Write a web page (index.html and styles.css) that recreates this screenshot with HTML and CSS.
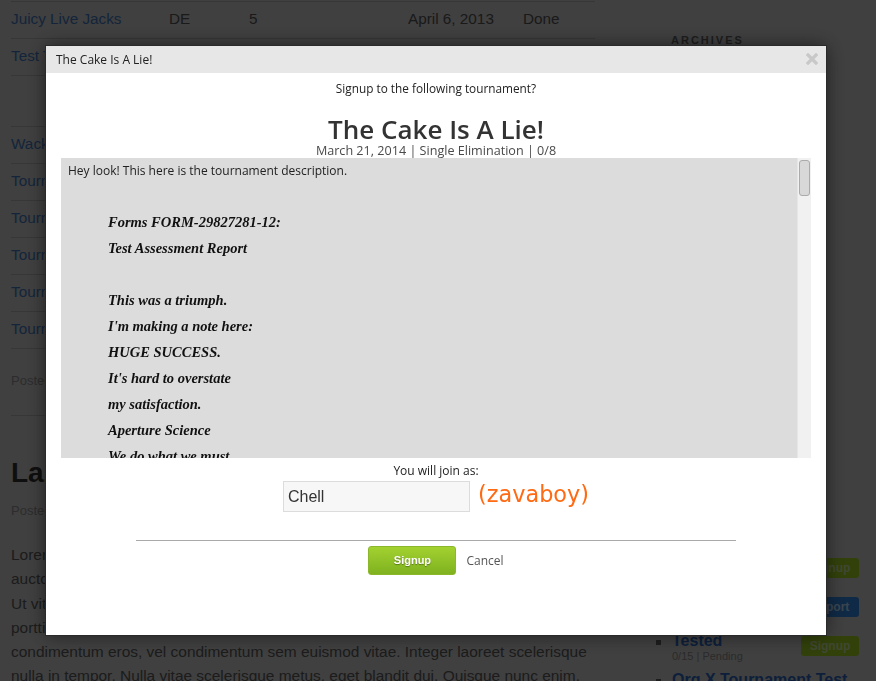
FILE: index.html
```html
<!DOCTYPE html>
<html>
<head>
<meta charset="utf-8">
<link rel="stylesheet" href="styles.css">
</head>
<body>
<div class="page">
  <div class="main">
    <table class="list">
      <tr><td class="c-name"><a>Juicy Live Jacks</a></td><td class="c-type">DE</td><td class="c-num">5</td><td class="c-date">April 6, 2013</td><td class="c-state">Done</td></tr>
      <tr><td class="c-name"><a>Test Tournament</a></td><td class="c-type">SE</td><td class="c-num">8</td><td class="c-date">May 2, 2013</td><td class="c-state">Done</td></tr>
      <tr class="tall"><td class="c-name"></td><td class="c-type"></td><td class="c-num"></td><td class="c-date"></td><td class="c-state"></td></tr>
      <tr><td class="c-name"><a>Wacky Cup</a></td><td class="c-type">SE</td><td class="c-num">4</td><td class="c-date">June 1, 2013</td><td class="c-state">Done</td></tr>
      <tr><td class="c-name"><a>Tournament 1</a></td><td class="c-type">SE</td><td class="c-num">8</td><td class="c-date">July 3, 2013</td><td class="c-state">Done</td></tr>
      <tr><td class="c-name"><a>Tournament 2</a></td><td class="c-type">DE</td><td class="c-num">8</td><td class="c-date">July 9, 2013</td><td class="c-state">Done</td></tr>
      <tr><td class="c-name"><a>Tournament 3</a></td><td class="c-type">SE</td><td class="c-num">16</td><td class="c-date">Aug 2, 2013</td><td class="c-state">Done</td></tr>
      <tr><td class="c-name"><a>Tournament 4</a></td><td class="c-type">SE</td><td class="c-num">8</td><td class="c-date">Aug 9, 2013</td><td class="c-state">Done</td></tr>
      <tr><td class="c-name"><a>Tournament 5</a></td><td class="c-type">DE</td><td class="c-num">8</td><td class="c-date">Sep 1, 2013</td><td class="c-state">Done</td></tr>
    </table>
    <div class="post-meta first">Posted in Tournaments</div>
    <article class="post">
      <h1 class="post-title">Lazy Tournament</h1>
      <div class="post-meta plain">Posted in Tournaments</div>
      <p class="post-body">Lorem ipsum dolor sit amet, consectetur adipiscing elit. Mauris vel nunc at nisl<br>auctor facilisis sed sit amet nisi. Vivamus tincidunt mollis mauris, eget porta.<br>Ut vitae tortor nec ligula blandit pretium. Phasellus ac ligula in lacus feugiat<br>porttitor. Nunc nec eros sit amet mi vehicula molestie. Suspendisse potenti. Sed<br>condimentum eros, vel condimentum sem euismod vitae. Integer laoreet scelerisque<br>nulla in tempor. Nulla vitae scelerisque metus, eget blandit dui. Quisque nunc enim.</p>
    </article>
  </div>
  <aside class="sidebar">
    <h3 class="widget-title">ARCHIVES</h3>
    <ul class="tlist">
      <li><div><a class="t-name">Open Cup</a><div class="t-meta">2/8 | Pending</div></div><span class="btn btn-green">Signup</span></li>
      <li><div><a class="t-name">Weekly Brawl</a><div class="t-meta">4/8 | Active</div></div><span class="btn btn-blue">Report</span></li>
      <li><div><a class="t-name">Tested</a><div class="t-meta">0/15 | Pending</div></div><span class="btn btn-green">Signup</span></li>
      <li><div><a class="t-name">Org X Tournament Test</a><div class="t-meta">0/8 | Pending</div></div></li>
    </ul>
  </aside>
</div>

<div class="overlay"></div>

<div class="modal">
  <div class="modal-head">
    <span class="modal-caption">The Cake Is A Lie!</span>
    <span class="modal-close"><svg width="12" height="12" viewBox="0 0 12 12"><path d="M2 2 L10 10 M10 2 L2 10" stroke="#c8c8c8" stroke-width="3.2" stroke-linecap="square"/></svg></span>
  </div>
  <div class="modal-body">
    <p class="ask">Signup to the following tournament?</p>
    <h2 class="t-title">The Cake Is A Lie!</h2>
    <p class="t-info">March 21, 2014 | Single Elimination | 0/8</p>
    <div class="desc">
      <div class="desc-content">
        <p class="desc-intro">Hey look! This here is the tournament description.</p>
        <div class="desc-quote">
          <div>Forms FORM-29827281-12:</div>
          <div>Test Assessment Report</div>
          <div>&nbsp;</div>
          <div>This was a triumph.</div>
          <div>I'm making a note here:</div>
          <div>HUGE SUCCESS.</div>
          <div>It's hard to overstate</div>
          <div>my satisfaction.</div>
          <div>Aperture Science</div>
          <div>We do what we must</div>
        </div>
      </div>
      <div class="scroll-track"><div class="scroll-thumb"></div></div>
    </div>
    <p class="join">You will join as:</p>
    <div class="join-row">
      <input class="join-input" type="text" value="Chell">
      <span class="join-user">(zavaboy)</span>
    </div>
    <hr class="sep">
    <div class="actions">
      <span class="btn-signup">Signup</span>
      <a class="cancel">Cancel</a>
    </div>
  </div>
</div>
</body>
</html>
```

FILE: styles.css
```css
html, body {
  margin: 0;
  padding: 0;
}
body {
  background: #b7b7b7;
  font-family: "Liberation Sans", Arial, sans-serif;
  color: #505050;
  width: 876px;
  height: 681px;
  overflow: hidden;
}
.page {
  display: flex;
  padding-left: 11px;
}
.main {
  width: 584px;
  padding-top: 1px;
}
.list {
  width: 584px;
  border-collapse: collapse;
  border-top: 1px solid #9d9d9d;
  font-size: 15.3px;
  table-layout: fixed;
}
.list tr {
  border-bottom: 1px solid #9d9d9d;
}
.list td {
  height: 18px;
  line-height: 18px;
  padding: 8px 0 10px 0;
  color: #4a4a4a;
  white-space: nowrap;
  overflow: hidden;
}
.list tr.tall td {
  height: 32px;
}
.list a {
  color: #3a6aa8;
}
.c-name { width: 158px; }
.c-type { width: 80px; }
.c-num { width: 159px; }
.c-date { width: 115px; }
.post-meta {
  font-size: 13px;
  line-height: 18px;
  color: #808080;
}
.post-meta.first {
  padding: 23px 0 25px;
  border-bottom: 1px solid #9d9d9d;
}
.post-title {
  margin: 40px 0 0;
  font-size: 28px;
  line-height: 34px;
  color: #2b2b2b;
}
.post-meta.plain {
  margin-top: 12px;
}
.post-body {
  margin: 23px 0 0;
  font-size: 15.45px;
  line-height: 24.3px;
  color: #505050;
  white-space: nowrap;
}
.sidebar {
  margin-left: 65px;
  width: 199px;
}
.widget-title {
  margin: 33px 0 0 11px;
  font-size: 11px;
  line-height: 14px;
  letter-spacing: 2px;
  font-weight: bold;
  color: #565656;
}
.tlist {
  margin: 508px 0 0;
  padding: 0 0 0 12px;
  list-style: square;
  color: #555;
}
.tlist li {
  height: 39px;
}
.tlist li > div {
  float: left;
}
.t-name {
  display: block;
  font-size: 16px;
  line-height: 16px;
  font-weight: bold;
  color: #285aa8;
}
.t-meta {
  font-size: 11px;
  line-height: 14px;
  color: #7a7a7a;
}
.btn {
  float: right;
  margin-top: 3px;
  width: 58px;
  height: 20px;
  line-height: 20px;
  text-align: center;
  border-radius: 3px;
  font-size: 12px;
  font-weight: bold;
  color: #b8cc90;
}
.btn-green { background: #8fba1e; }
.btn-blue { background: #2c78c8; color: #a8c4e0; }

.overlay {
  position: fixed;
  left: 0;
  top: 0;
  width: 876px;
  height: 681px;
  background: rgba(0, 0, 0, 0.65);
}

.modal {
  position: fixed;
  left: 46px;
  top: 46px;
  width: 780px;
  height: 589px;
  background: #fff;
  box-shadow: 0 0 18px rgba(0, 0, 0, 0.55);
  font-family: "Open Sans", sans-serif;
  color: #222;
  outline: 1px solid #2a2a2a;
}
.modal-head {
  height: 27px;
  background: #e7e7e7;
  display: flex;
  align-items: center;
  justify-content: space-between;
  padding: 0 8px 0 10px;
}
.modal-caption {
  font-size: 12px;
  color: #222;
}
.modal-close {
  display: flex;
  margin-top: -1px;
}
.modal-body {
  padding: 0 15px;
  text-align: center;
}
.ask {
  margin: 0;
  padding-top: 7px;
  font-size: 11.8px;
  line-height: 17px;
}
.t-title {
  margin: 17px 0 0;
  font-size: 26px;
  line-height: 30px;
  font-weight: 600;
  color: #333;
}
.t-info {
  margin: 0;
  font-size: 12.6px;
  line-height: 13px;
  color: #4a4a4a;
}
.desc {
  margin-top: 1px;
  height: 300px;
  background: #dcdcdc;
  display: flex;
  text-align: left;
}
.desc-content {
  flex: 1;
  overflow: hidden;
  padding: 4px 7px 0;
}
.scroll-track {
  width: 14px;
  flex: none;
  box-sizing: border-box;
  background: #f1f1f1;
  border-left: 1px solid #e6e6e6;
  padding: 2px 1px 0 1px;
}
.scroll-thumb {
  height: 36px;
  box-sizing: border-box;
  background: #d8d8d8;
  border: 1px solid #ababab;
  border-radius: 3px;
}
.desc-intro {
  margin: 0;
  font-size: 12px;
  line-height: 17px;
  color: #222;
}
.desc-quote {
  margin: 30px 0 0 40px;
  font-family: "Liberation Serif", "Times New Roman", serif;
  font-style: italic;
  font-weight: bold;
  font-size: 14.5px;
  line-height: 26px;
  color: #111;
}
.join {
  margin: 0;
  padding-top: 4px;
  font-size: 12px;
  line-height: 17px;
}
.join-row {
  display: flex;
  justify-content: center;
  align-items: center;
  gap: 8px;
  margin-top: 2px;
}
.join-input {
  width: 187px;
  height: 31px;
  box-sizing: border-box;
  border: 1px solid #dcdcdc;
  background: #f7f7f7;
  font-family: "Liberation Sans", Arial, sans-serif;
  font-size: 16px;
  color: #333;
  padding: 0 4px;
  margin: 0;
}
.join-user {
  font-family: "DejaVu Sans", Verdana, sans-serif;
  font-size: 22.4px;
  line-height: 28px;
  margin-top: -6px;
  color: #ff6a12;
}
.sep {
  width: 600px;
  margin: 28px auto 0;
  border: 0;
  border-top: 1px solid #aaa;
  height: 0;
}
.actions {
  display: flex;
  justify-content: center;
  align-items: center;
  gap: 10px;
  margin-top: 5px;
}
.btn-signup {
  width: 88px;
  height: 29px;
  line-height: 27px;
  border-radius: 3px;
  background: linear-gradient(#a2d130, #7fb21f);
  border: 1px solid #8ab82a;
  box-sizing: border-box;
  color: #fff;
  font-family: "Liberation Sans", Arial, sans-serif;
  font-weight: bold;
  font-size: 11px;
  text-shadow: 0 1px 1px rgba(0, 0, 0, 0.35);
}
.cancel {
  font-size: 12px;
  color: #555;
}
```
